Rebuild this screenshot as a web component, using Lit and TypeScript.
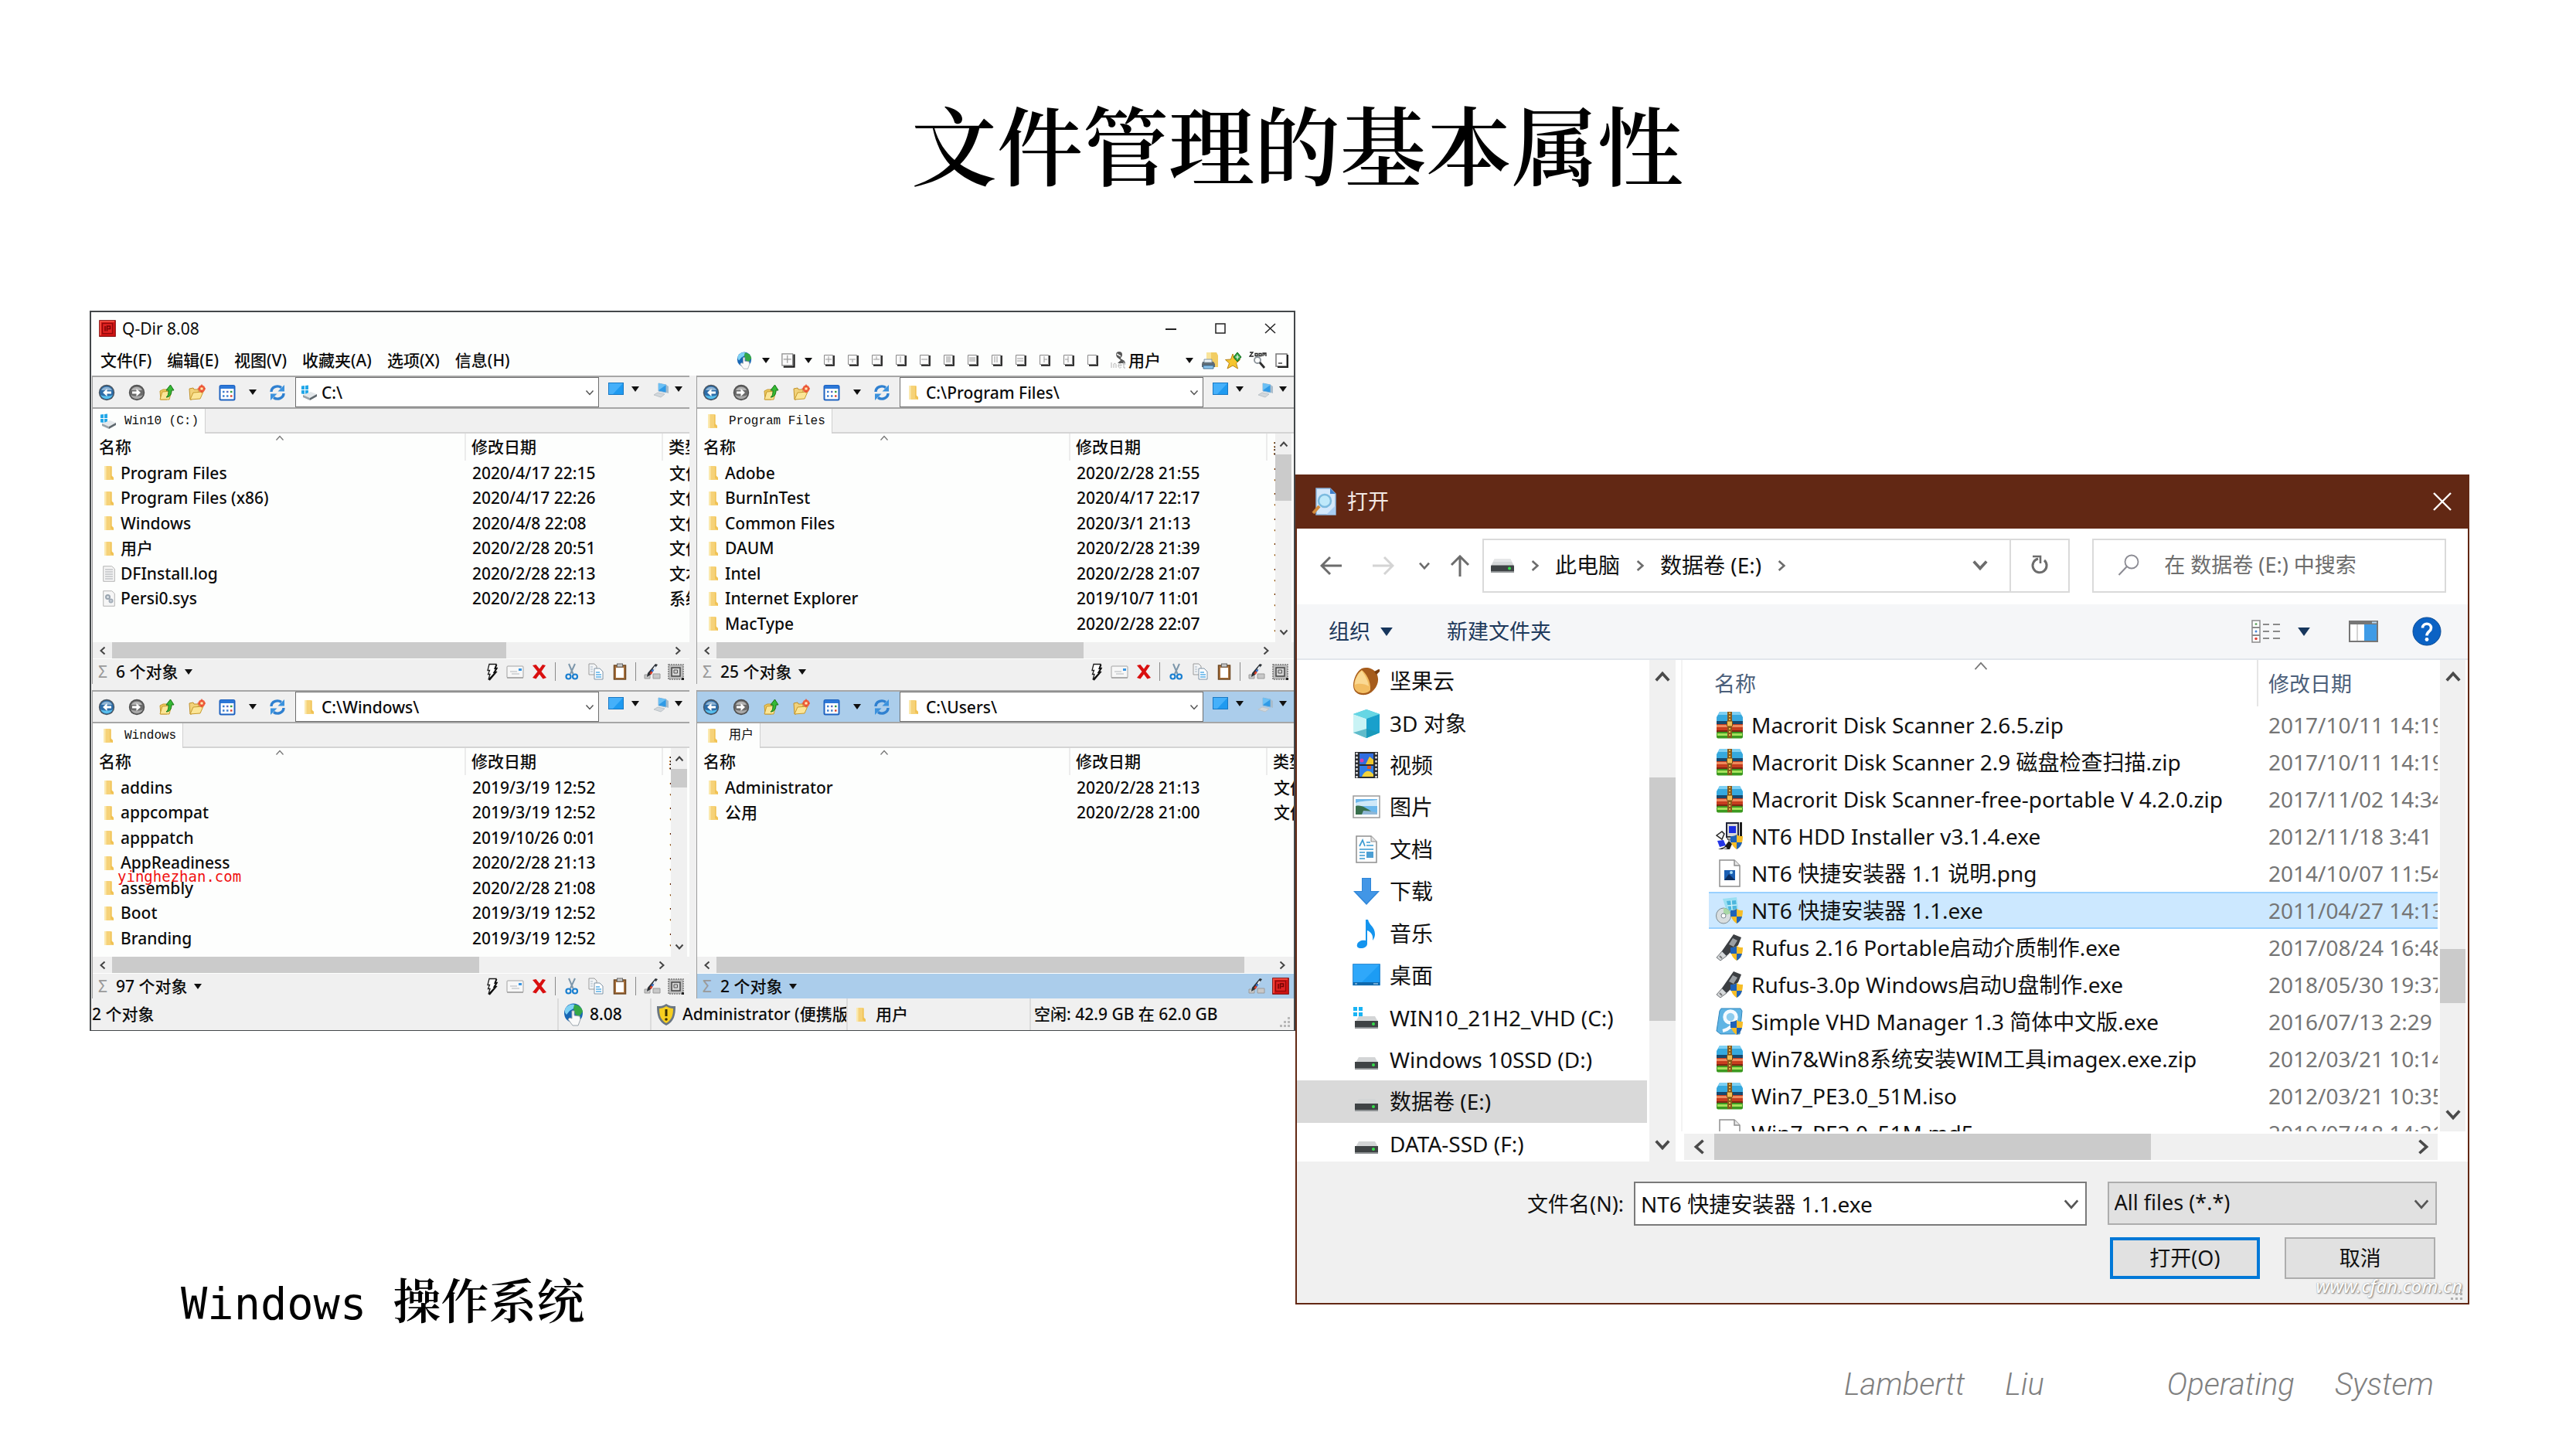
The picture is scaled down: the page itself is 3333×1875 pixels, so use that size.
import { LitElement, html, svg, css, nothing, type TemplateResult } from "lit";
import { customElement, property } from "lit/decorators.js";
import { classMap } from "lit/directives/class-map.js";

/* ---------- icon set ---------- */

const pic = (w: number, h: number, body: unknown, vw = w, vh = h) => html`<svg
  class="pic" width=${w} height=${h} viewBox="0 0 ${vw} ${vh}" fill="none" aria-hidden="true">${body}</svg>`;

const globeBody = () => svg`<ellipse cx="13" cy="13" rx="12" ry="12.500" fill="#1766b4"/><path d="M4 5c4-4 8-4 11-3l-2 5-5 3-4 5C1 12 1 9 4 5z" fill="#7fd2f4"/><path d="M14 2c6 0 10 4 11 9l-5 7-5-4-2-7z" fill="#35a846"/><path d="M11 10v10l-3-1-2 2 6 8h7l3-8-1-4-7-1v-6z" fill="#fafafa" stroke="#9aa4ac"/>`;

const I: Record<string, () => TemplateResult> = {
  back: () => pic(22, 22, svg`<circle cx="11" cy="11" r="10.2" fill="#4a5560"/><circle cx="11" cy="11" r="8.8" fill="#2d6da8"/><path d="M3 14a8.8 8.8 0 0 0 16 0c-4 2-12 2-16 0z" fill="#58c0ee"/><path d="M4 8a8 8 0 0 1 14 0z" fill="#8fb4d4"/><path d="M11.5 6l-5.5 5 5.5 5v-3.4H17V9.400h-5.500z" fill="#fff"/>`),
  fwd: () => pic(22, 22, svg`<circle cx="11" cy="11" r="10.2" fill="#4e4e4e"/><circle cx="11" cy="11" r="8.800" fill="#6b6b6b"/><path d="M3 14a8.800 8.800 0 0 0 16 0c-4 2-12 2-16 0z" fill="#a9a9a9"/><path d="M4 8a8 8 0 0 1 14 0z" fill="#b4b4b4"/><path d="M10.500 6l5.500 5-5.500 5v-3.400H5V9.400h5.500z" fill="#fff"/>`),
  upFolder: () => pic(22, 22, svg`<path d="M2 9l4-2h5v13H3z" fill="#edc95c" stroke="#c79a2e"/><path d="M2 20l3-10 12-1-3 11z" fill="#fbe596" stroke="#c79a2e"/><path d="M10 17c3-2 3-5 3-9h-3l5.500-7 4.500 7h-3c0 5-2 9-7 9z" fill="#35b935" stroke="#177417"/>`),
  newFolder: () => pic(22, 22, svg`<path d="M1 6l5-1 1 2 6 0v3l-9 10-2 0z" fill="#f2d27a" stroke="#c1912a"/><path d="M2 20l4-9 13-1-4 9z" fill="#fbe596" stroke="#c79a2e"/><circle cx="17" cy="6" r="4.500" fill="#f0603c"/><path d="M17 .5v11M11.500 6h11" stroke="#e4472e" stroke-width="1.200"/><circle cx="17" cy="6" r="1.800" fill="#ffe9b0"/>`),
  views: () => pic(22, 22, svg`<rect x="1.500" y="2" width="19" height="18.500" rx="1.500" fill="#fff" stroke="#1e62c0" stroke-width="2"/><rect x="2" y="2" width="18" height="4" fill="#2c78d8"/><path d="M5 10h2.500M5 15.500h2.500M10 15.500h2.500" stroke="#3f7fd0" stroke-width="2.400"/><path d="M10 10h2.500" stroke="#5b6fc0" stroke-width="2.400"/><path d="M15 10h2.500" stroke="#349a44" stroke-width="2.400"/><path d="M15 15.500h2.500" stroke="#d8402c" stroke-width="2.400"/>`),
  refresh: () => pic(22, 22, svg`<path d="M3 10a8 7 0 0 1 13-5.500" stroke="#2f80d0" stroke-width="3.400"/><path d="M20 1v8.500h-8.500z" fill="#3c92dd"/><path d="M19 12a8 7 0 0 1-13 5.500" stroke="#2f80d0" stroke-width="3.400"/><path d="M2 21v-8.500h8.500z" fill="#3c92dd"/>`),
  driveWin: () => pic(22, 20, svg`<path d="M1 1.500l4-.5v5H1zM6 1l4-.5V6H6zM1 7h4v5l-4-.5zM6 7h4v5.500l-4-.5z" fill="#22a7e8"/><path d="M3 13l10-4 8 3-9 5z" fill="#e4e8eb"/><path d="M3 13l9 4v3l-9-4z" fill="#9aa3aa"/><path d="M12 17l9-5v3l-9 5z" fill="#5f686e"/>`),
  folder: () => pic(14, 20, svg`<path d="M1 1h9.500v12.500L13 16v3H1z" fill="#f6d278"/><path d="M1 1h2.500v18H1z" fill="#fbe9ae"/><path d="M9 2h1.500v11.500L13 16v3l-4-2z" fill="#f0c254"/>`),
  log: () => pic(16, 21, svg`<path d="M.7.7h11L15.300 4v16.300H.7z" fill="#f4f4f4" stroke="#b5b5b5"/><path d="M3 5h10M3 8h10M3 11h10M3 14h10M3 17h10" stroke="#a8acb0"/>`),
  sys: () => pic(16, 21, svg`<path d="M.7.700h11L15.300 4v16.300H.7z" fill="#f6f6f6" stroke="#b5b5b5"/><circle cx="6.500" cy="8.500" r="2.500" fill="#dfe5ea" stroke="#9aa5b0" stroke-width="2"/><circle cx="10.500" cy="13.500" r="2" fill="#dfe5ea" stroke="#a3adb8" stroke-width="2"/>`),
  desk: () => pic(20, 16, svg`<rect x=".5" y=".5" width="19" height="15" fill="#1f9af0" stroke="#1878c4"/><path d="M1 1h18L6 15H1z" fill="#45b0fa"/>`),
  monitor: () => pic(22, 20, svg`<path d="M7 1l10 2v10L7 11z" fill="#2f9ae6" stroke="#8db6d6"/><path d="M7 1l10 2-10 7z" fill="#6bc0f5"/><path d="M6 13l9 2-5 4-9-3z" fill="#d2d7db" stroke="#bcc3c8"/><path d="M17 3l3 2v9l-3-1z" fill="#a9bccb"/>`),
  bolt: () => pic(20, 23, svg`<path d="M7 1.500h9l-1 5h2l-3 5h1.500L6 21.500l2-7H5.500l2-5H5z" fill="#fff" stroke="#1b1b1b" stroke-width="1.300"/><path d="M16.500 2l-2 5h2l-3 5h2L7 22" stroke="#111" stroke-width="2"/>`),
  mail: () => pic(23, 17, svg`<rect x="1" y="1" width="21" height="15" rx="1" fill="#f7f7f7" stroke="#a3a3a3"/><path d="M5 8h9M7 11h10" stroke="#b2b6ba"/><path d="M16 4h4v3h-4z" fill="#3a96e2"/><path d="M1 16h21" stroke="#8c8c8c"/>`),
  del: () => pic(20, 20, svg`<path d="M1 2l4.500-1L10 6.500l4-5.500 4 1-5.500 8 6.500 8-4.500 1.500-4.500-6-4.500 6L1 18l6.500-8z" fill="#d90f0f"/>`),
  cut: () => pic(18, 22, svg`<path d="M5 1l5.500 13M13 1L7 14" stroke="#7d97ab" stroke-width="2"/><circle cx="4.500" cy="17.500" r="3" stroke="#1a7fd0" stroke-width="2.200"/><circle cx="13" cy="17.500" r="3" stroke="#1a7fd0" stroke-width="2.200"/>`),
  copy: () => pic(22, 22, svg`<path d="M2 1h7l3 3v11H2z" fill="#f2f4f6" stroke="#9b9b9b"/><path d="M9 7h7l4 4v10H9z" fill="#fff" stroke="#7f93a6"/><path d="M11 12h5M11 15h7M11 18h7" stroke="#57aee8" stroke-width="1.500"/><path d="M4 5h3M4 8h3M4 11h3" stroke="#a9b9c6"/>`),
  paste: () => pic(18, 22, svg`<rect x="1.500" y="3" width="15" height="18" fill="#a9713c" stroke="#6f4a25" stroke-width="1.500"/><rect x="4" y="6" width="10" height="13" fill="#fff"/><rect x="5.500" y="1" width="7" height="4" fill="#c9c9c9" stroke="#666"/>`),
  pen: () => pic(22, 22, svg`<path d="M1 15h7v5H1zM12 14h9v6h-9z" fill="#c8c8c8" stroke="#9a9a9a"/><path d="M15 1l3 1-9 13-5 3 1-5z" fill="#2c3136"/><path d="M14 4l2 1-2.500 4-2-1z" fill="#e8f0fa"/><path d="M11 8l2 1.500-1.500 2-2-1.500z" fill="#3a7ae0"/><path d="M9.500 10.500l2 1.500-2 3-2-1.500z" fill="#e0402c"/>`),
  qGray: () => pic(21, 21, svg`<rect x="1" y="1" width="19" height="19" fill="#bdbdbd" stroke="#7a7a7a" stroke-width="1.500" stroke-dasharray="2 1"/><rect x="5" y="5" width="11" height="11" fill="#d4d4d4" stroke="#454545" stroke-width="1.500"/><path d="M8 8h4.500v4H8z" stroke="#555"/><path d="M18 18h3v3h-3z" fill="#222"/>`),
  qRed: () => pic(22, 22, svg`<rect x=".7" y=".7" width="20.600" height="20.600" fill="#d01414" stroke="#7c0808"/><path d="M1 1h19v2H3v17H1z" fill="#f0483c"/><rect x="4.500" y="4.500" width="13" height="13" stroke="#8e0a0a" stroke-width="1.300" fill="#e02222"/><path d="M8 8v6.500M10.500 14.500V8h4v3.500h-3" stroke="#730303" stroke-width="1.500"/>`),
  globe: () => pic(26, 30, globeBody()),
  globeSmall: () => pic(20, 23, globeBody(), 26, 30),
  user: () => pic(20, 22, svg`<path d="M7 4a4 4 0 0 1 8 0c0 3-2 3-2 5l5 3 1 3H9l4-4-5-4z" fill="#555"/><path d="M8 3l5 3" stroke="#eee" stroke-width="1.500"/><path d="M1 14v7M4 21v-5c2-1.500 3 0 3 1v4M10 18h4c0-3-4-3-4 0s2 4 4 2M17 13v8h2M15.500 16h4" stroke="#b4b4b4"/>`),
  printer: () => pic(23, 23, svg`<path d="M7 1h13l2 4v15H7z" fill="#f2cd63"/><path d="M7 1h6v18H7z" fill="#f9e49a"/><path d="M2 13h14l2 3v4H1v-4z" fill="#5f6a72"/><path d="M4 10h10v4H4z" fill="#eef3f7" stroke="#8096a6"/><path d="M3 18h13v4H3z" fill="#8cc4ec" stroke="#3c6f96"/>`),
  star: () => pic(23, 23, svg`<path d="M10 3l2.500 7 7 .5-5 4.500 2 7-6.500-4-7 4 2.500-7-5-4.500 7-.5z" fill="#f6c52c" stroke="#b9851a"/><path d="M16 1l5 6-5 6-5-6z" fill="#2da53c" stroke="#12681d"/><path d="M16 4v6M13.500 7h5" stroke="#fff"/>`),
  zoom: () => pic(24, 24, svg`<path d="M1 2h4L1 7h5M8 3.500h3v3H8zM13 3.500h3v3h-3zM18 7V3h4v4M20 3v3" stroke="#222" stroke-width="1.300"/><circle cx="11" cy="12" r="4" stroke="#8a9299" stroke-width="1.800"/><path d="M14 15l6 7" stroke="#2d2d2d" stroke-width="2.800"/>`),
  page: () => pic(20, 20, svg`<path d="M2 2h14v16H2z" fill="#fff" stroke="#777" stroke-width="1.500"/><path d="M17 3v16H4" stroke="#222" stroke-width="2"/><path d="M5 14h5" stroke="#444" stroke-width="1.500"/>`),
  shield: () => pic(26, 30, svg`<path d="M13 1c4 3 8 3 12 3 0 12-2 20-12 25C3 24 1 16 1 4c4 0 8 0 12-3z" fill="#6a7682"/><path d="M13 4c3 2 6 3 9 3 0 9-2 15-9 19-7-4-9-10-9-19 3 0 6-1 9-3z" fill="#f7cf1f"/><path d="M13 8v9" stroke="#3b3000" stroke-width="3"/><circle cx="13" cy="21" r="1.800" fill="#3b3000"/>`),
  search: () => pic(28, 28, svg`<circle cx="18" cy="10" r="8.500" stroke="#8b8b93" stroke-width="1.800"/><path d="M12 16L1.500 27" stroke="#8b8b93" stroke-width="2"/>`),
  drive: () => pic(32, 20, svg`<path d="M6 1h20l5 9H1z" fill="#d5d7d8"/><path d="M6 1h20l2 4H4z" fill="#e6e7e8"/><rect x="1" y="9.500" width="30" height="9" rx="1" fill="#3f4345"/><path d="M1 17h30v2H1z" fill="#8d9193"/><circle cx="25" cy="13.500" r="2" fill="#35e04a"/>`),
};

/* window-arrangement glyphs of the main toolbar: inner strokes of a 16px frame */
const LAYOUTS = ["M7 3v8M3 7h8", "M3 7h8M7 7v4", "M3 7h8M7 3v4", "M7 3v8", "M3 7h8", "M5 3v8M7 3v8M9 3v8", "M3 5h8M3 7h8M3 9h8", "M5 3v8M8 3v8", "M3 6h8M3 9h8", "M7 3v8M7 7h4", "M7 3v8M3 7h4", ""];
const layoutPic = (d: string, size = 16) => pic(size, size, svg`<path d="M1.500 1.500h11v12h-11z" fill="#fafafa" stroke="#8a8a8a"/><path d=${d} stroke="#9a9a9a"/><path d="M14 2v12.800H3" stroke="#1c1c1c" stroke-width="1.800"/>`, 16, 16);

const tri = (w = 10, h = 7, color = "#111") => pic(w, h, svg`<path d="M0 0h10L5 7z" fill=${color}/>`, 10, 7);

const chev = (dir: "up" | "down" | "left" | "right", size = 12, color = "#444", sw = 2) => {
  const d = { up: "M1.500 8.500L6 3.500l4.500 5", down: "M1.500 3.500L6 8.500l4.500-5", left: "M8.500 1.500L3.500 6l5 4.500", right: "M3.500 1.500L8.500 6l-5 4.500" }[dir];
  return pic(size, size, svg`<path d=${d} stroke=${color} stroke-width=${sw}/>`, 12, 12);
};

const zipPic = () => pic(36, 36, svg`<path d="M5 1h26l4 7v5H1V8z" fill="#36a9de"/><path d="M5 1h26l2 4H3z" fill="#7fd0f2"/><rect x="1" y="13" width="34" height="4" fill="#17496e"/><rect x="1" y="17" width="34" height="8" fill="#c63d1e"/><rect x="1" y="18" width="34" height="3" fill="#ee8a5c"/><rect x="1" y="25" width="34" height="3" fill="#7b2713"/><rect x="1" y="27" width="34" height="8.500" rx="2" fill="#3c9a20"/><rect x="2" y="29" width="32" height="3" fill="#a5e25c"/><rect x="15" y="1" width="6" height="34" fill="#8a5a1c"/><path d="M18 2v32" stroke="#e3b44c" stroke-width="2" stroke-dasharray="2 2"/><rect x="14.500" y="13" width="7" height="7" rx="1" fill="#f0c054" stroke="#7a4a10"/>`);
const uac = svg`<path d="M27 16c3 2 5 2 8 2 0 8-2 13-8 17-6-4-8-9-8-17 3 0 5 0 8-2z" fill="#f6bd27"/><path d="M27 16v10h-8c0-3 0-5 0-8 3 0 5 0 8-2zM27 26h7c-1 4-3 7-7 9z" fill="#1f62b8"/>`;
const usbPic = () => pic(36, 36, svg`<path d="M23 1l10 4-4 10-15 14-7-5z" fill="#3b3e42"/><path d="M22 6l6 3-5 8-6-3z" fill="#9a9fa4"/><path d="M8 23l6 6-8 6-5-4z" fill="#d5d8da" stroke="#6b6f73"/><path d="M5 29l3 3" stroke="#777" stroke-width="2"/>${uac}`);
const hddPic = () => pic(36, 36, svg`<path d="M14 1h15v18H14z" fill="#d8d8d8" stroke="#20243a" stroke-width="2"/><path d="M17 5h9v9h-9z" fill="#1b2ee0"/><path d="M31 0h3v20h-3z" fill="#1d1d1d"/><path d="M14 19h14l3 4H16z" fill="#bdbdbd" stroke="#222"/><path d="M1 17l7-5 3 3-3 7z" fill="#f2f2f2" stroke="#222" stroke-width="1.500"/><path d="M2 24l8-1 3 7-8 2z" fill="#2334e6"/><path d="M3 35l8-3 6-8 4 4-3 7z" fill="#1d1d1d"/><path d="M8 35l5-3 2 2z" fill="#e8e8e8"/>${uac}`);
const pngPic = () => pic(36, 36, svg`<path d="M5 1h19l7 7v27H5z" fill="#fff" stroke="#8e8e8e" stroke-width="1.500"/><path d="M24 1v7h7" fill="#e8e8e8" stroke="#8e8e8e" stroke-width="1.500"/><rect x="11" y="14" width="14" height="13" fill="#1a5fb4"/><path d="M11 27l6-8 8 8z" fill="#0c2f62"/><circle cx="20" cy="17" r="2" fill="#a4dcf8"/>`);
const nt6Pic = () => pic(36, 36, svg`<path d="M9 3l18-2 2 17-14 4z" fill="#9adff2"/><path d="M14 6l12-1 1 11-10 2z" fill="#4bb6dd"/><path d="M15 12l12-1M20 5l1 12" stroke="#c8f0fa" stroke-width="1.500"/><ellipse cx="10" cy="25" rx="9.500" ry="10" fill="#d8dee0" stroke="#7e8a90"/><path d="M10 15a10 10 0 0 1 9 7l-9 3z" fill="#a9d8a6"/><ellipse cx="10" cy="25" rx="3" ry="3" fill="#fff" stroke="#7e8a90"/>${uac}`);
const vhdPic = () => pic(36, 36, svg`<path d="M7 1h25l2 3-3 30H6l-5-4L5 4z" fill="#5fb4e4" stroke="#2f86bd"/><circle cx="19" cy="12" r="7.500" stroke="#f5fbff" stroke-width="4.500" fill="#8fcdee"/><path d="M9 30c8-2 15-8 17-16" stroke="#f5fbff" stroke-width="4"/>${uac}`);
const blankPic = () => pic(36, 36, svg`<path d="M5 1h19l7 7v27H5z" fill="#fff" stroke="#8e8e8e" stroke-width="1.500"/><path d="M24 1v7h7" fill="#e8e8e8" stroke="#8e8e8e" stroke-width="1.500"/>`);

const NAV_PICS: Record<string, () => TemplateResult> = {
  nut: () => pic(36, 38, svg`<path d="M12 3c8-3 20 1 21 13 1 10-8 20-16 21C8 38 1 34 1 25 1 16 6 6 12 3z" fill="#a65c1c"/><path d="M12 5c5 4 12 14 11 26-4 6-21 6-21-6C2 17 7 8 12 5z" fill="#f2bd62"/><path d="M12 6c3 4 8 12 9 20-6-4-14-4-18-2 0-7 4-14 9-18z" fill="#fad993"/><path d="M28 7c3-1 4-3 7-3l0 3-4 4z" fill="#7a3d0e"/>`),
  cube: () => pic(36, 38, svg`<path d="M18 1l17 6v24l-17 7-17-7V7z" fill="#3fc4dc"/><path d="M1 7l17 6v25L1 31z" fill="#c9f3f5"/><path d="M35 7l-17 6v25l17-7z" fill="#19a0cc"/><path d="M1 31l17-5 17 5-17 7z" fill="#1b96ad" opacity=".6"/><path d="M18 1l17 6-17 6L1 7z" fill="#66d6e4"/>`),
  video: () => pic(36, 36, svg`<rect x="3" y="1" width="30" height="34" fill="#2a2d33"/><path d="M5.500 2v33M30.500 2v33" stroke="#e9e9e9" stroke-width="2.500" stroke-dasharray="2.500 2.500"/><rect x="9" y="3" width="18" height="14" fill="#2f6de0"/><path d="M17 17l5-10 5 4v6z" fill="#f0c92c"/><circle cx="12" cy="12" r="2.500" fill="#d640a8"/><rect x="9" y="19" width="18" height="14" fill="#2f7de8"/><path d="M12 33c4-9 10-9 15-3v3z" fill="#f2d23a"/><path d="M19 19h5v4h-5z" fill="#d5562a"/>`),
  image: () => pic(36, 30, svg`<rect x="1" y="1" width="34" height="28" fill="#fff" stroke="#9a9a9a" stroke-width="1.500"/><rect x="4" y="5" width="28" height="20" fill="#6db8ec"/><path d="M4 10c8-3 18-2 28-4v8H4z" fill="#cfe8f8"/><path d="M4 14c8-2 14 3 22 8v3H4z" fill="#376f4c"/><path d="M14 20c6 0 12 1 18 3v2H12z" fill="#8fb7d6"/>`),
  doc: () => pic(36, 36, svg`<path d="M5 1h19l7 7v27H5z" fill="#fdfdfd" stroke="#8e8e8e" stroke-width="1.500"/><path d="M24 1v7h7" fill="#e3e3e3" stroke="#8e8e8e"/><path d="M9 14l4-8 3 8M18 9h5M18 13h9M9 18h18M9 22h7M9 26h7M9 30h7" stroke="#3a9ad2" stroke-width="1.700"/><rect x="18" y="21" width="9" height="8" fill="#4c9fd4"/>`),
  down: () => pic(36, 36, svg`<path d="M12 1h12v17h11L18 36 1 18h11z" fill="#2f86d8"/><path d="M13 2h10v17h9L18 34 4 19h9z" fill="#4296e6"/>`),
  music: () => pic(36, 38, svg`<path d="M17 1h3c2 8 9 9 9 19 0 3-1 5-3 8 1-7-2-11-7-13v17c0 4-4 6-8 6s-6-2-5-5c1-4 6-6 11-5z" fill="#1494ee"/>`),
  desk: () => pic(36, 30, svg`<rect x=".7" y=".7" width="34.600" height="27" fill="#1c9cf4" stroke="#1479c6"/><path d="M1 1h34L12 24H1z" fill="#2fa8fa"/><rect x="1" y="24" width="34" height="4" fill="#0e68ac"/><path d="M3 26h3M27 26h6" stroke="#d4ecfb"/>`),
  sysDrive: () => pic(36, 30, svg`<path d="M1 1h5v5H1zM8 1h5v5H8zM1 8h5v5H1zM8 8h5v5H8z" fill="#19b4f4"/><path d="M8 13h21l4 7H4z" fill="#d3d5d6"/><rect x="3" y="19" width="30" height="9" fill="#3f4345"/><path d="M3 27h30v2H3z" fill="#8d9193"/><circle cx="27" cy="23" r="2" fill="#35e04a"/>`),
  drive: () => pic(36, 30, svg`<path d="M8 12h21l4 7H4z" fill="#d3d5d6"/><rect x="3" y="18" width="30" height="9" fill="#3f4345"/><path d="M3 26h30v2H3z" fill="#8d9193"/><circle cx="27" cy="22" r="2" fill="#35e04a"/>`),
};

const base = css`
  * { box-sizing: border-box; }
  .pic { display: block; flex: none; }
  button {
    font: inherit; color: inherit; background: none; border: 0; padding: 0; margin: 0;
    display: flex; align-items: center; justify-content: center; flex: none;
  }
  input { font: inherit; color: inherit; border: 0; padding: 0; margin: 0; background: none; outline: 0; min-width: 0; }
  table { border-collapse: collapse; table-layout: fixed; }
  th, td { padding: 0; text-align: left; font-weight: inherit; white-space: nowrap; overflow: hidden; }
`;

/* ---------- one explorer pane of the four-pane window ---------- */

interface Row { name: string; date: string; type: string; icon?: string }
interface PaneData {
  path: string; pathIcon: string; tab: string; rows: Row[]; count: string;
  vthumb?: number; hthumb: number; active?: boolean; mark?: string;
}

@customElement("explorer-pane")
class ExplorerPane extends LitElement {
  @property({ attribute: false }) data!: PaneData;

  static styles = [base, css`
    :host { display: flex; flex-direction: column; min-width: 0; background: #fdfefd; border-left: 1px solid #9c9c9c; }
    .bar { height: 43px; display: flex; background: #f0f0f0; border-top: 2px solid #a6a6a6; border-bottom: 2px solid #a6a6a6; }
    .active .bar, .active .status { background: #abcdeb; }
    .tool { width: 39px; padding-right: 4px; }
    .tool.slim { width: 26px; padding-right: 2px; }
    .path { flex: 1; min-width: 0; margin-left: 2px; display: flex; align-items: center; background: #fff; border: 1px solid #6e6e6e; padding: 0 5px; }
    .path .glyph { width: 24px; display: flex; justify-content: center; flex: none; margin-right: 4px; }
    .path input { flex: 1; }
    .tail { display: flex; align-items: flex-start; padding: 7px 9px 0 12px; height: 100%; }
    .tail .drop { width: 30px; height: 16px; }
    .tail .wide { margin-left: 8px; }
    .tail .last { width: 10px; height: 16px; margin-left: 6px; }
    .tabs { height: 32px; display: flex; background: #f0f0f0; border-bottom: 2px solid #d4d4d4; }
    .tab { height: 32px; background: #fdfefd; border-right: 1px solid #d0d0d0; gap: 8px; padding: 0 8px 0 7px; font: 16px/30px "Liberation Mono", "Noto Sans CJK SC", monospace; }
    .tab .glyph { width: 26px; display: flex; justify-content: center; }
    .body { position: relative; height: 270px; display: flex; overflow: hidden; }
    .list { flex: 1; min-width: 0; overflow: hidden; position: relative; }
    table { width: 797px; }
    .c1 { width: 482px; } .c2 { width: 255px; } .c3 { width: 60px; }
    th { height: 35px; padding-left: 8px; line-height: 35px; }
    th + th { border-left: 2px solid #ececec; padding-left: 7px; }
    td { height: 32px; line-height: 31px; padding-left: 9px; }
    tr:nth-child(even) td { height: 33px; }
    .name { display: flex; align-items: center; padding-left: 2px; }
    .name .glyph { width: 20px; display: flex; justify-content: center; margin-right: 5px; }
    .sort { position: absolute; left: 236px; top: 0; }
    .vs { width: 21px; margin-right: 3px; background: #f0f0f0; display: flex; flex-direction: column; }
    .vs button { height: 27px; }
    .vs .track { flex: 1; }
    .thumb { background: #cbcbcb; }
    .hs { height: 21px; margin-bottom: 1px; background: #f0f0f0; display: flex; padding-right: 3px; }
    .hs.short { padding-right: 24px; }
    .hs button { width: 25px; }
    .hs .track { flex: 1; }
    .hs .thumb { height: 100%; }
    .status { height: 32px; display: flex; align-items: center; background: #f0f0f0; padding: 0 2px 0 7px; }
    .sum { color: #9a9a9a; width: 23px; font-weight: 400; }
    .status .arrow { margin-left: 9px; }
    .fill { flex: 1; }
    .act { width: 31px; height: 30px; }
    .sep { width: 1px; height: 24px; background: #8a8a8a; margin: 0 5px; }
    .mark { position: absolute; left: 32px; top: 156px; color: #f01010; font: 19px/20px "DejaVu Sans Mono", monospace; }
  `];

  render() {
    const d = this.data;
    const act = (n: string) => html`<button class="act" aria-label=${n}>${I[n]()}</button>`;
    const acts = d.active
      ? html`${act("pen")}${act("qRed")}`
      : html`${["bolt", "mail", "del"].map(act)}<span class="sep"></span>${["cut", "copy", "paste"].map(act)}<span class="sep"></span>${["pen", "qGray"].map(act)}`;
    return html`
      <div class=${classMap({ active: !!d.active })}>
        <div class="bar">
          ${["back", "fwd", "upFolder", "newFolder", "views"].map(n => html`<button class="tool" aria-label=${n}>${I[n]()}</button>`)}
          <button class="tool slim" aria-label="View options">${tri()}</button>
          <button class="tool" aria-label="Refresh">${I.refresh()}</button>
          <div class="path">
            <span class="glyph">${I[d.pathIcon]()}</span>
            <input aria-label="Path" .value=${d.path} />
            <button aria-label="History">${chev("down", 12, "#555", 1.500)}</button>
          </div>
          <div class="tail">
            <button aria-label="Desktop">${I.desk()}</button>
            <button class="drop" aria-label="Desktop options">${tri()}</button>
            <button class="wide" aria-label="Computer">${I.monitor()}</button>
            <button class="last" aria-label="Computer options">${tri()}</button>
          </div>
        </div>
        <div class="tabs"><button class="tab"><span class="glyph">${I[d.pathIcon]()}</span>${d.tab}</button></div>
        <div class="body">
          <div class="list">
            <span class="sort">${chev("up", 12, "#777", 1.300)}</span>
            <table>
              <colgroup><col class="c1" /><col class="c2" /><col class="c3" /></colgroup>
              <thead><tr><th>名称</th><th>修改日期</th><th>类型</th></tr></thead>
              <tbody>
                ${d.rows.map(r => html`<tr>
                  <td><div class="name"><span class="glyph">${I[r.icon ?? "folder"]()}</span>${r.name}</div></td>
                  <td>${r.date}</td><td>${r.type}</td>
                </tr>`)}
              </tbody>
            </table>
          </div>
          ${d.vthumb ? html`<div class="vs">
            <button aria-label="Scroll up">${chev("up")}</button>
            <div class="track"><div class="thumb" style="height:${d.vthumb}%"></div></div>
            <button aria-label="Scroll down">${chev("down")}</button>
          </div>` : nothing}
          ${d.mark ? html`<span class="mark">${d.mark}</span>` : nothing}
        </div>
        <div class=${classMap({ hs: true, short: !!d.vthumb })}>
          <button aria-label="Scroll left">${chev("left")}</button>
          <div class="track"><div class="thumb" style="width:${d.hthumb}%"></div></div>
          <button aria-label="Scroll right">${chev("right")}</button>
        </div>
        <div class="status">
          <span class="sum">Σ</span><span>${d.count}</span><button class="arrow" aria-label="Selection">${tri()}</button>
          <span class="fill"></span>${acts}
        </div>
      </div>`;
  }
}

const dir = (name: string, date: string): Row => ({ name, date, type: "文件夹" });

const PANES: PaneData[] = [
  {
    path: "C:\\", pathIcon: "driveWin", tab: "Win10 (C:)", count: "6 个对象", hthumb: 71,
    rows: [
      dir("Program Files", "2020/4/17 22:15"), dir("Program Files (x86)", "2020/4/17 22:26"),
      dir("Windows", "2020/4/8 22:08"), dir("用户", "2020/2/28 20:51"),
      { name: "DFInstall.log", date: "2020/2/28 22:13", type: "文本文档", icon: "log" },
      { name: "Persi0.sys", date: "2020/2/28 22:13", type: "系统文件", icon: "sys" },
    ],
  },
  {
    path: "C:\\Program Files\\", pathIcon: "folder", tab: "Program Files", count: "25 个对象", hthumb: 68, vthumb: 28,
    rows: [
      dir("Adobe", "2020/2/28 21:55"), dir("BurnInTest", "2020/4/17 22:17"), dir("Common Files", "2020/3/1 21:13"),
      dir("DAUM", "2020/2/28 21:39"), dir("Intel", "2020/2/28 21:07"), dir("Internet Explorer", "2019/10/7 11:01"),
      dir("MacType", "2020/2/28 22:07"), dir("ModifiableWindowsApps", ""),
    ],
  },
  {
    path: "C:\\Windows\\", pathIcon: "folder", tab: "Windows", count: "97 个对象", hthumb: 68, vthumb: 11, mark: "yinghezhan.com",
    rows: [
      dir("addins", "2019/3/19 12:52"), dir("appcompat", "2019/3/19 12:52"), dir("apppatch", "2019/10/26 0:01"),
      dir("AppReadiness", "2020/2/28 21:13"), dir("assembly", "2020/2/28 21:08"), dir("Boot", "2019/3/19 12:52"),
      dir("Branding", "2019/3/19 12:52"), dir("CbsTemp", ""),
    ],
  },
  {
    path: "C:\\Users\\", pathIcon: "folder", tab: "用户", count: "2 个对象", hthumb: 95, active: true,
    rows: [dir("Administrator", "2020/2/28 21:13"), dir("公用", "2020/2/28 21:00")],
  },
];

/* ---------- four-pane file manager window ---------- */

@customElement("quad-window")
class QuadWindow extends LitElement {
  static styles = [base, css`
    :host { display: block; border: 2px solid #43474a; border-bottom-width: 1px; background: #fdfefd; color: #0c0c0c; font: 500 21px/30px "Noto Sans", "Noto Sans CJK SC", sans-serif; }
    .title { height: 44px; display: flex; align-items: center; padding: 0 3px 2px 10px; gap: 8px; font-weight: 400; }
    .title .fill, .menus .fill { flex: 1; }
    .title button { width: 56px; height: 42px; }
    .menus { height: 38px; display: flex; align-items: center; padding: 0 0 2px 12px; }
    .menu { margin-right: 20px; }
    .g { width: 31px; height: 30px; }
    .g.drop { width: 22px; }
    .g.web { width: 26px; }
    .acct { gap: 3px; margin: 0 26px 0 8px; }
    .panes { display: grid; grid-template-columns: 1fr 1fr; gap: 8px 9px; padding-left: 1px; background: #f0f0f0; }
    .foot { height: 41px; display: grid; grid-template-columns: 603fr 120fr 254fr 237fr 342fr; background: #f0f0f0; line-height: 43px; white-space: nowrap; }
    .foot > div { display: flex; align-items: center; gap: 8px; padding-left: 6px; border-left: 2px solid #dcdcdc; overflow: hidden; min-width: 0; }
    .foot > .f1 { border: 0; padding-left: 1px; }
    .foot > .f4 { padding-left: 10px; gap: 12px; }
    .foot > .f5 { padding-left: 4px; justify-content: space-between; }
    .grip { align-self: flex-end; padding: 4px; }
  `];

  render() {
    return html`
      <div class="title">
        ${I.qRed()}<span>Q-Dir 8.08</span><span class="fill"></span>
        <button aria-label="Minimize">${pic(14, 14, svg`<path d="M0 8h14" stroke="#222" stroke-width="2"/>`)}</button>
        <button aria-label="Maximize">${pic(14, 14, svg`<path d="M1 1h12v12H1z" stroke="#222" stroke-width="1.500"/>`)}</button>
        <button aria-label="Close">${pic(15, 14, svg`<path d="M1 1l13 12M14 1L1 13" stroke="#222" stroke-width="1.500"/>`)}</button>
      </div>
      <div class="menus">
        ${["文件(F)", "编辑(E)", "视图(V)", "收藏夹(A)", "选项(X)", "信息(H)"].map(m => html`<button class="menu">${m}</button>`)}
        <span class="fill"></span>
        <button class="g" aria-label="Web">${I.globeSmall()}</button>
        <button class="g drop web" aria-label="Web options">${tri()}</button>
        <button class="g" aria-label="Layout">${layoutPic("M7 3v8M3 7h8", 20)}</button>
        <button class="g drop" aria-label="Layout options">${tri()}</button>
        ${LAYOUTS.map((d, i) => html`<button class="g" aria-label="Layout ${i + 1}">${layoutPic(d)}</button>`)}
        <button class="acct">${I.user()}用户</button>
        <button class="g drop" aria-label="User options">${tri()}</button>
        ${["printer", "star", "zoom", "page"].map(n => html`<button class="g" aria-label=${n}>${I[n]()}</button>`)}
      </div>
      <div class="panes">${PANES.map(p => html`<explorer-pane .data=${p}></explorer-pane>`)}</div>
      <div class="foot">
        <div class="f1">2 个对象</div>
        <div>${I.globe()}8.08</div>
        <div>${I.shield()}Administrator (便携版x64)</div>
        <div class="f4">${I.folder()}用户</div>
        <div class="f5">空闲: 42.9 GB 在 62.0 GB<span class="grip">${pic(14, 14, svg`<path d="M10 1h3v3h-3zM5 6h3v3H5zM10 6h3v3h-3zM0 11h3v3H0zM5 11h3v3H5zM10 11h3v3h-3z" fill="#b8b8b8"/>`)}</span></div>
      </div>`;
  }
}

/* ---------- "open file" dialog ---------- */

const PLACES: [string, string][] = [
  ["nut", "坚果云"], ["cube", "3D 对象"], ["video", "视频"], ["image", "图片"], ["doc", "文档"], ["down", "下载"],
  ["music", "音乐"], ["desk", "桌面"], ["sysDrive", "WIN10_21H2_VHD (C:)"], ["drive", "Windows 10SSD (D:)"],
  ["drive", "数据卷 (E:)"], ["drive", "DATA-SSD (F:)"],
];

const FILES: [() => TemplateResult, string, string][] = [
  [zipPic, "Macrorit Disk Scanner 2.6.5.zip", "2017/10/11 14:19"],
  [zipPic, "Macrorit Disk Scanner 2.9 磁盘检查扫描.zip", "2017/10/11 14:19"],
  [zipPic, "Macrorit Disk Scanner-free-portable V 4.2.0.zip", "2017/11/02 14:34"],
  [hddPic, "NT6 HDD Installer v3.1.4.exe", "2012/11/18 3:41"],
  [pngPic, "NT6 快捷安装器 1.1 说明.png", "2014/10/07 11:54"],
  [nt6Pic, "NT6 快捷安装器 1.1.exe", "2011/04/27 14:13"],
  [usbPic, "Rufus 2.16 Portable启动介质制作.exe", "2017/08/24 16:48"],
  [usbPic, "Rufus-3.0p Windows启动U盘制作.exe", "2018/05/30 19:37"],
  [vhdPic, "Simple VHD Manager 1.3 简体中文版.exe", "2016/07/13 2:29"],
  [zipPic, "Win7&Win8系统安装WIM工具imagex.exe.zip", "2012/03/21 10:14"],
  [zipPic, "Win7_PE3.0_51M.iso", "2012/03/21 10:35"],
  [blankPic, "Win7_PE3.0_51M.md5", "2019/07/18 14:21"],
];

@customElement("open-dialog")
class OpenDialog extends LitElement {
  static styles = [base, css`
    :host { display: block; position: relative; border: 2px solid #622814; background: #fff; color: #111; font: 28px/40px "Noto Sans", "Noto Sans CJK SC", sans-serif; }
    .title { height: 68px; display: flex; align-items: center; background: #622814; color: #f3e9e4; padding: 0 20px 2px 18px; gap: 13px; font-size: 27px; }
    .title span { flex: 1; }
    .nav { height: 98px; display: flex; align-items: center; padding: 0 28px 2px 24px; }
    .nav > button { width: 40px; height: 40px; }
    .nav > .fwd { margin-left: 28px; } .nav > .hist { margin-left: 18px; width: 30px; } .nav > .up { margin: 0 9px 0 11px; }
    .crumbs { flex: 747 1 0; height: 70px; min-width: 0; border: 2px solid #dadada; display: flex; align-items: center; padding-left: 8px; white-space: nowrap; }
    .crumbs button { height: 66px; padding-bottom: 2px; }
    .crumbs > .arrow { width: 52px; display: flex; justify-content: center; }
    .crumbs .fill { flex: 1; }
    .crumbs .re { width: 76px; border-left: 2px solid #dadada; }
    .crumbs .pick { width: 76px; }
    .search { flex: 422 1 0; height: 70px; min-width: 0; margin-left: 29px; border: 2px solid #dadada; display: flex; align-items: center; gap: 32px; padding: 0 0 2px 31px; font-size: 27px; }
    .search input { flex: 1; }
    .search input::placeholder { color: #6d6d6d; opacity: 1; }
    .cmds { height: 72px; display: flex; align-items: center; background: #f5f6f8; border-bottom: 2px solid #e2e6ec; padding: 0 34px 0 41px; color: #1e395b; font-size: 27px; }
    .cmds .fill { flex: 1; }
    .cmds .org { gap: 12px; margin-right: 69px; }
    .cmds .see { gap: 21px; margin-right: 49px; } .cmds .pre { margin-right: 44px; }
    .main { height: 649px; display: grid; grid-template-columns: 490px 1fr 39px; grid-template-rows: 610px 39px; }
    .side { grid-row: 1 / 3; display: flex; overflow: hidden; }
    .places { flex: 1; height: 653px; margin: 0 3px 0 0; padding: 0; list-style: none; display: grid; grid-template-rows: repeat(12, 1fr); }
    .places a { display: flex; align-items: center; height: 100%; gap: 12px; padding-left: 72px; color: inherit; text-decoration: none; white-space: nowrap; }
    .places .on { background: #d9d9d9; }
    .vs { background: #f0f0f0; display: flex; flex-direction: column; width: 34px; }
    .vs button { height: 44px; }
    .vs .track { flex: 1; display: flex; flex-direction: column; }
    .thumb { background: #cbcbcb; }
    .list { position: relative; overflow: hidden; margin-left: 7px; border-left: 2px solid #f3f3f3; padding-left: 34px; }
    table { width: 100%; }
    .c1 { width: 710px; }
    th { height: 60px; padding: 2px 0 0 7px; color: #4c607a; font-size: 27px; }
    th + th { border-left: 2px solid #e5e5e5; padding-left: 13px; }
    td { height: 48px; line-height: 46px; }
    td + td { padding-left: 14px; color: #757575; }
    .on td { background: #cce8ff; box-shadow: inset 0 2px #99d1ff, inset 0 -2px #99d1ff; }
    .file { display: flex; align-items: center; gap: 10px; padding-left: 9px; }
    .sort { position: absolute; left: 376px; top: -2px; }
    .main > .vs { margin-left: 3px; width: 33px; }
    .hs { grid-column: 2; margin: 3px 0 2px 11px; background: #f0f0f0; display: flex; }
    .hs button { width: 39px; }
    .hs .track { flex: 1; display: flex; }
    .form { height: 183px; background: #f0f0f0; padding: 26px 40px 0; display: grid; grid-template-columns: 383px 585fr 440fr; column-gap: 13px; row-gap: 15px; align-content: start; font-size: 27px; }
    .form > label { text-align: right; line-height: 57px; }
    .combo { height: 57px; border: 2px solid #7a7a7a; background: #fff; display: flex; align-items: center; padding: 0 7px 0 7px; font-size: 28px; }
    .combo input { flex: 1; }
    .kind { position: relative; margin-left: 14px; height: 56px; }
    .kind select { appearance: none; width: 100%; height: 100%; font: inherit; color: inherit; background: #e1e1e1; border: 2px solid #adadad; border-radius: 0; padding: 0 7px 2px; }
    .kind .pic { position: absolute; right: 9px; top: 18px; pointer-events: none; }
    .btns { grid-column: 3; margin: 0 2px 0 17px; display: grid; grid-template-columns: 1fr 1fr; gap: 32px; }
    .btns button { height: 54px; background: #e1e1e1; border: 2px solid #adadad; }
    .btns .primary { border: 4px solid #0078d7; }
    .mark { position: absolute; right: 7px; bottom: 6px; font: italic 500 24px/32px "Noto Sans", sans-serif; color: #fbfbfb; text-shadow: 1px 1px 2px #7d7d7d, 0 0 1px #8d8d8d; }
    .grip { position: absolute; right: 6px; bottom: 4px; }
  `];

  render() {
    const c = "#6c6c6c";
    return html`
      <div class="title">
        ${pic(34, 38, svg`<path d="M7 2h18l7 7v27H7z" fill="#d4e8fb" stroke="#8bb2da" stroke-width="1.500"/><path d="M25 2v7h7z" fill="#3f7fcb"/><path d="M20 36l12-12v12z" fill="#a9cdf2"/><circle cx="18" cy="18" r="8" fill="#bfe9fa" stroke="#7bbadf" stroke-width="2.500"/><path d="M11 25l-8 9" stroke="#d28b3c" stroke-width="4"/>`)}
        <span>打开</span>
        <button aria-label="Close">${pic(26, 26, svg`<path d="M2 2l22 22M24 2L2 24" stroke="#fff" stroke-width="2.400"/>`)}</button>
      </div>
      <div class="nav">
        <button aria-label="Back">${pic(28, 26, svg`<path d="M13 2L2 13l11 11M2 13h26" stroke=${c} stroke-width="3"/>`)}</button>
        <button class="fwd" aria-label="Forward">${pic(28, 26, svg`<path d="M15 2l11 11-11 11M26 13H0" stroke="#d4d4d4" stroke-width="3"/>`)}</button>
        <button class="hist" aria-label="Recent">${chev("down", 16, c, 2)}</button>
        <button class="up" aria-label="Up">${pic(26, 28, svg`<path d="M2 13L13 2l11 11M13 2v26" stroke=${c} stroke-width="3"/>`)}</button>
        <div class="crumbs">
          ${I.drive()}
          <span class="arrow">${chev("right", 16, c, 2)}</span><button>此电脑</button>
          <span class="arrow">${chev("right", 16, c, 2)}</span><button>数据卷 (E:)</button>
          <span class="arrow">${chev("right", 16, c, 2)}</span>
          <span class="fill"></span>
          <button class="pick" aria-label="Locations">${chev("down", 22, c, 2)}</button>
          <button class="re" aria-label="Refresh">${pic(26, 28, svg`<path d="M19 8a9 9 0 1 1-8-2" stroke=${c} stroke-width="3"/><path d="M4 3h10v9" stroke=${c} stroke-width="2.600"/>`)}</button>
        </div>
        <label class="search">${I.search()}<input type="search" aria-label="搜索" placeholder="在 数据卷 (E:) 中搜索" /></label>
      </div>
      <div class="cmds">
        <button class="org">组织 ${tri(18, 11, "#17365d")}</button>
        <button>新建文件夹</button>
        <span class="fill"></span>
        <button class="see" aria-label="View">${pic(38, 30, svg`<rect x="1" y="1" width="10" height="28" fill="#fff" stroke="#8a8a8a" stroke-width="1.500"/><path d="M1 10h10M1 20h10M15 6h8M28 6h9M15 15h8M28 15h9M15 24h8M28 24h9" stroke="#8a8a8a" stroke-width="2"/><circle cx="6" cy="5.500" r="1.500" fill="#6aa86a"/><circle cx="6" cy="15" r="1.500" fill="#4a88d8"/><circle cx="6" cy="24.500" r="1.800" fill="#e0443a"/>`)}${tri(18, 11, "#17365d")}</button>
        <button class="pre" aria-label="Preview pane">${pic(38, 28, svg`<rect x="1" y="1" width="36" height="26" fill="#fff" stroke="#767676" stroke-width="2"/><path d="M1 3h36" stroke="#767676" stroke-width="4"/><path d="M11 5v21" stroke="#a8a8a8"/><path d="M20 5h16v21H20z" fill="#3f9be6"/><path d="M30 2.500h6" stroke="#b7d8f2" stroke-width="2"/>`)}</button>
        <button aria-label="Help">${pic(38, 38, svg`<circle cx="19" cy="19" r="18" fill="#0b62c4" stroke="#0a4b96"/><path d="M13.500 14.500c0-7 11-7 11 0 0 5-5.500 4.500-5.500 10" stroke="#fff" stroke-width="3.600"/><circle cx="19" cy="29.500" r="2.400" fill="#fff"/>`)}</button>
      </div>
      <div class="main">
        <div class="side">
          <ul class="places">
            ${PLACES.map(([icon, label], i) => html`<li class=${i === 10 ? "on" : ""}><a href="#">${NAV_PICS[icon]()}${label}</a></li>`)}
          </ul>
          <div class="vs">
            <button aria-label="Scroll up">${chev("up", 22, "#4a4a4a", 2)}</button>
            <div class="track"><div style="flex:109"></div><div class="thumb" style="flex:317"></div><div style="flex:139"></div></div>
            <button aria-label="Scroll down">${chev("down", 22, "#4a4a4a", 2)}</button>
          </div>
        </div>
        <div class="list">
          <span class="sort">${chev("up", 20, "#777", 1)}</span>
          <table>
            <colgroup><col class="c1" /><col /></colgroup>
            <thead><tr><th>名称</th><th>修改日期</th></tr></thead>
            <tbody>${FILES.map(([icon, name, date], i) => html`<tr class=${i === 5 ? "on" : ""}>
              <td><div class="file">${icon()}${name}</div></td><td>${date}</td></tr>`)}</tbody>
          </table>
        </div>
        <div class="vs">
          <button aria-label="Scroll up">${chev("up", 22, "#4a4a4a", 2)}</button>
          <div class="track"><div style="flex:333"></div><div class="thumb" style="flex:70"></div><div style="flex:123"></div></div>
          <button aria-label="Scroll down">${chev("down", 22, "#4a4a4a", 2)}</button>
        </div>
        <div class="hs">
          <button aria-label="Scroll left">${chev("left", 22, "#4a4a4a", 2)}</button>
          <div class="track"><div class="thumb" style="width:63%"></div></div>
          <button aria-label="Scroll right">${chev("right", 22, "#4a4a4a", 2)}</button>
        </div>
      </div>
      <div class="form">
        <label for="fname">文件名(N):</label>
        <div class="combo"><input id="fname" .value=${"NT6 快捷安装器 1.1.exe"} /><button aria-label="Recent names">${chev("down", 22, "#555", 1.500)}</button></div>
        <div class="kind"><select aria-label="文件类型"><option>All files (*.*)</option></select>${chev("down", 22, "#555", 1.500)}</div>
        <div class="btns"><button class="primary">打开(O)</button><button>取消</button></div>
      </div>
      <span class="mark">www.cfan.com.cn</span>
      <span class="grip">${pic(18, 14, svg`<path d="M14 0h3v3h-3zM8 5h3v3H8zM14 5h3v3h-3zM2 11h3v3H2zM8 11h3v3H8zM14 11h3v3h-3z" fill="#b0b0b0"/>`)}</span>`;
  }
}

/* ---------- slide ---------- */

@customElement("app-root")
class AppRoot extends LitElement {
  static styles = [base, css`
    :host { display: flex; flex-direction: column; min-height: 100vh; background: #fff; color: #000; overflow: hidden; }
    h1 { margin: 0; padding: 115px 0 127px 24px; text-align: center; font: 600 111px/160px "Liberation Serif", "Noto Serif CJK SC", "AR PL UMing CN", "Noto Sans CJK SC", serif; }
    .stage { display: grid; grid-template-columns: 1560fr 1519fr; padding: 0 138px 0 116px; align-items: start; }
    open-dialog { margin-top: 212px; }
    .caption { margin: 310px 0 0 118px; font: 57px/84px "DejaVu Sans Mono", "Noto Serif CJK SC", "Noto Sans CJK SC", monospace; white-space: nowrap; }
    .caption span { font-size: 62px; font-weight: 600; }
    footer { display: flex; justify-content: flex-end; gap: 52px; padding: 39px 184px 0 0; font: italic 300 40px/48px Roboto, sans-serif; color: #808080; }
    footer .gap { margin-left: 107px; }
  `];

  render() {
    return html`
      <h1>文件管理的基本属性</h1>
      <div class="stage">
        <div>
          <quad-window></quad-window>
          <p class="caption">Windows <span>操作系统</span></p>
        </div>
        <open-dialog></open-dialog>
      </div>
      <footer><span>Lambertt</span><span>Liu</span><span class="gap">Operating</span><span>System</span></footer>`;
  }
}
